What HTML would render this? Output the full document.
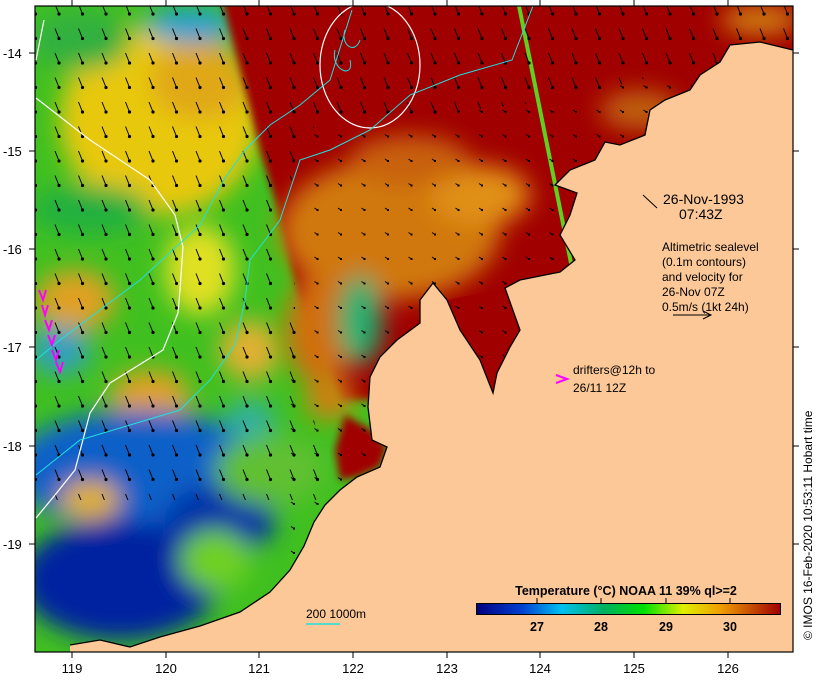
<!DOCTYPE html>
<html><head><meta charset="utf-8"><style>
html,body{margin:0;padding:0;background:#fff;}
svg{display:block;font-family:"Liberation Sans",sans-serif;}
</style></head><body>
<svg width="820" height="680" viewBox="0 0 820 680" xmlns="http://www.w3.org/2000/svg">
<defs>
<linearGradient id="cb" x1="0" x2="1" y1="0" y2="0">
<stop offset="0" stop-color="#000080"/><stop offset="0.15" stop-color="#0040d0"/><stop offset="0.28" stop-color="#00c0f0"/><stop offset="0.42" stop-color="#00b060"/><stop offset="0.55" stop-color="#00e000"/><stop offset="0.68" stop-color="#e0f000"/><stop offset="0.8" stop-color="#f0a000"/><stop offset="1" stop-color="#a00000"/>
</linearGradient>
<filter id="bl" x="-20%" y="-20%" width="140%" height="140%"><feGaussianBlur stdDeviation="12"/></filter>
<filter id="bl2"><feGaussianBlur stdDeviation="4"/></filter>
<pattern id="arr" width="23.5" height="24.5" patternUnits="userSpaceOnUse">
<line x1="8" y1="4" x2="12" y2="14" stroke="#000" stroke-width="1"/><circle cx="12" cy="14" r="1.6" fill="#000"/>
</pattern>
<pattern id="arr2" width="23.5" height="24.5" patternUnits="userSpaceOnUse">
<line x1="9" y1="12" x2="12" y2="14" stroke="#000" stroke-width="1"/><rect x="11" y="13" width="2" height="2" fill="#000"/>
</pattern>
<clipPath id="ocean"><path d="M35,6 H793 V50 L760,42 730,45 720,62 700,75 690,90 665,100 650,110 645,135 620,145 605,142 595,160 570,170 555,185 577,193 570,215 560,235 575,260 560,272 540,276 520,280 505,288 520,330 510,347 497,373 493,393 480,360 460,330 447,300 433,283 420,300 420,323 397,340 380,357 370,377 368,407 372,440 387,447 380,467 357,477 340,490 325,505 314,522 304,546 290,570 270,592 240,612 200,626 160,637 130,647 100,640 70,645 70,652 H35 Z"/></clipPath>
<clipPath id="east"><path d="M300,130 L560,100 L800,40 V700 H280 Z"/></clipPath>
</defs>
<rect x="35" y="6" width="758" height="646" fill="#fcc898"/>
<g clip-path="url(#ocean)">
<rect x="35" y="6" width="758" height="646" fill="#40c020"/>
<g filter="url(#bl)">
<ellipse cx="160" cy="120" rx="100" ry="95" fill="#e8c810"/>
<ellipse cx="200" cy="80" rx="50" ry="40" fill="#e0a818"/>
<ellipse cx="80" cy="40" rx="50" ry="30" fill="#30b040"/>
<ellipse cx="190" cy="25" rx="45" ry="18" fill="#20a0d0"/>
<ellipse cx="90" cy="210" rx="60" ry="25" fill="#20b040"/>
<ellipse cx="200" cy="270" rx="35" ry="45" fill="#e0e020"/>
<ellipse cx="75" cy="300" rx="40" ry="30" fill="#e0a020"/>
<ellipse cx="60" cy="350" rx="30" ry="25" fill="#30a0c0"/>
<ellipse cx="150" cy="395" rx="40" ry="25" fill="#e0a020"/>
<ellipse cx="250" cy="350" rx="30" ry="30" fill="#e0b030"/>
<ellipse cx="140" cy="470" rx="130" ry="60" fill="#1060c8"/>
<ellipse cx="120" cy="580" rx="100" ry="60" fill="#0020a0"/>
<ellipse cx="220" cy="520" rx="55" ry="35" fill="#0030a8"/>
<ellipse cx="215" cy="560" rx="35" ry="30" fill="#70d020"/>
<ellipse cx="270" cy="470" rx="55" ry="35" fill="#60c030"/>
<ellipse cx="90" cy="500" rx="30" ry="20" fill="#e0b020"/>
<ellipse cx="250" cy="420" rx="25" ry="20" fill="#30b0a0"/>
</g>
<path filter="url(#bl2)" d="M222,0 H800 V400 L340,400 300,300 285,240 275,200 260,150 248,100 Z" fill="#a00000"/>
<g filter="url(#bl)">
<ellipse cx="390" cy="230" rx="110" ry="70" fill="#d07810"/>
<ellipse cx="480" cy="195" rx="50" ry="30" fill="#e09018"/>
<ellipse cx="320" cy="330" rx="35" ry="55" fill="#d07010"/>
<ellipse cx="410" cy="160" rx="60" ry="25" fill="#c86008"/>
<ellipse cx="360" cy="320" rx="22" ry="45" fill="#20b070"/>
<ellipse cx="330" cy="400" rx="25" ry="20" fill="#d08010"/>
<ellipse cx="760" cy="20" rx="40" ry="15" fill="#d08010"/>
<ellipse cx="640" cy="110" rx="40" ry="20" fill="#c06008"/>
</g>
<path d="M345,415 L372,430 387,447 380,467 357,477 340,480 335,450 Z" fill="#a00000" filter="url(#bl2)"/>
<path d="M447,300 L520,285 520,330 500,380 490,385 470,340 Z" fill="#a00000"/>
<line x1="519" y1="6" x2="572" y2="268" stroke="#60d020" stroke-width="4"/>
<path d="M35,6 H800 V40 L560,100 300,130 280,250 300,350 330,500 H35 Z" fill="url(#arr)"/>
<g clip-path="url(#east)"><rect x="35" y="6" width="758" height="646" fill="url(#arr2)"/></g>
<path d="M36,98 L90,140 150,180 175,215 183,247 180,290 178,313 163,350 110,383 90,413 75,470 55,495 36,518" stroke="#fff" stroke-width="1.2" fill="none"/>
<path d="M44,20 L36,60" stroke="#fff" stroke-width="1.2" fill="none"/>
<ellipse cx="370" cy="65" rx="50" ry="63" stroke="#fff" stroke-width="1.2" fill="none"/>
<path d="M533,6 L512,60 460,75 410,95 370,130 330,150 300,160 290,190 280,220 250,260 245,300 235,345 210,380 180,410 130,425 80,440 36,475" stroke="#20e0e0" stroke-width="1" fill="none"/>
<path d="M352,10 L330,80 300,105 270,125 245,150 225,178 200,225 140,280 100,310 60,340 36,360" stroke="#20e0e0" stroke-width="1" fill="none"/>
<path d="M345,30 C340,45 355,55 360,40 M335,50 C330,70 355,80 350,60" stroke="#20e0e0" stroke-width="1" fill="none"/>
</g>
<g stroke="#f0f" stroke-width="2" fill="none">
<path d="M39,290 L43,300 46,290"/><path d="M42,305 L45,315 48,305"/><path d="M45,320 L49,330 52,320"/><path d="M48,335 L52,345 55,335"/><path d="M52,350 L56,360 59,350"/><path d="M56,362 L60,372 63,362"/>
</g>
<path d="M70,645 L100,640 130,647 160,637 200,626 240,612 270,592 290,570 304,546 314,522 325,505 340,490 357,477 380,467 387,447 372,440 368,407 370,377 380,357 397,340 420,323 420,300 433,283 447,300 460,330 480,360 493,393 497,373 510,347 520,330 505,288 520,280 540,276 560,272 575,260 560,235 570,215 577,193 555,185 570,170 595,160 605,142 620,145 645,135 650,110 665,100 690,90 700,75 720,62 730,45 760,42 793,50" stroke="#000" stroke-width="1.3" fill="none"/>
<rect x="35" y="6" width="758" height="646" fill="none" stroke="#000" stroke-width="1.2"/>
<g stroke="#000" stroke-width="1">
<line x1="72" y1="652" x2="72" y2="658"/><line x1="166" y1="652" x2="166" y2="658"/><line x1="259" y1="652" x2="259" y2="658"/><line x1="353" y1="652" x2="353" y2="658"/><line x1="447" y1="652" x2="447" y2="658"/><line x1="540" y1="652" x2="540" y2="658"/><line x1="634" y1="652" x2="634" y2="658"/><line x1="728" y1="652" x2="728" y2="658"/>
<line x1="72" y1="0" x2="72" y2="6"/><line x1="166" y1="0" x2="166" y2="6"/><line x1="259" y1="0" x2="259" y2="6"/><line x1="353" y1="0" x2="353" y2="6"/><line x1="447" y1="0" x2="447" y2="6"/><line x1="540" y1="0" x2="540" y2="6"/><line x1="634" y1="0" x2="634" y2="6"/><line x1="728" y1="0" x2="728" y2="6"/>
<line x1="29" y1="53" x2="35" y2="53"/><line x1="29" y1="151" x2="35" y2="151"/><line x1="29" y1="249" x2="35" y2="249"/><line x1="29" y1="347" x2="35" y2="347"/><line x1="29" y1="446" x2="35" y2="446"/><line x1="29" y1="544" x2="35" y2="544"/>
<line x1="793" y1="53" x2="799" y2="53"/><line x1="793" y1="151" x2="799" y2="151"/><line x1="793" y1="249" x2="799" y2="249"/><line x1="793" y1="347" x2="799" y2="347"/><line x1="793" y1="446" x2="799" y2="446"/><line x1="793" y1="544" x2="799" y2="544"/>
</g>
<g font-size="13" fill="#000">
<text x="3" y="58">-14</text><text x="3" y="156">-15</text><text x="3" y="254">-16</text><text x="3" y="352">-17</text><text x="3" y="451">-18</text><text x="3" y="549">-19</text>
<g text-anchor="middle"><text x="72" y="673">119</text><text x="166" y="673">120</text><text x="259" y="673">121</text><text x="353" y="673">122</text><text x="447" y="673">123</text><text x="540" y="673">124</text><text x="634" y="673">125</text><text x="728" y="673">126</text></g>
</g>
<text x="663" y="204" font-size="14">26-Nov-1993</text>
<text x="679" y="219" font-size="14">07:43Z</text>
<line x1="643" y1="195" x2="657" y2="208" stroke="#000"/>
<g font-size="12"><text x="662" y="251">Altimetric sealevel</text><text x="662" y="266">(0.1m contours)</text><text x="662" y="281">and velocity for</text><text x="662" y="296">26-Nov 07Z</text><text x="662" y="311">0.5m/s (1kt 24h)</text>
<text x="573" y="374">drifters@12h to</text><text x="573" y="392">26/11 12Z</text>
<text x="306" y="618">200  1000m</text></g>
<path d="M673,315 H711 M703,311 L711,315 703,319" stroke="#000" fill="none"/>
<path d="M556,375 L567,379 556,383" stroke="#f0f" stroke-width="2" fill="none"/>
<line x1="306" y1="624" x2="340" y2="624" stroke="#20e0e0" stroke-width="1.5"/>
<text x="626" y="595" font-size="12.5" font-weight="bold" text-anchor="middle">Temperature (°C) NOAA 11 39% ql&gt;=2</text>
<rect x="476.5" y="603.5" width="304" height="11" fill="url(#cb)" stroke="#000"/>
<g stroke="#000"><line x1="537" y1="598" x2="537" y2="603"/><line x1="601" y1="598" x2="601" y2="603"/><line x1="666" y1="598" x2="666" y2="603"/><line x1="730" y1="598" x2="730" y2="603"/></g>
<g font-size="12.5" font-weight="bold" text-anchor="middle"><text x="537" y="631">27</text><text x="601" y="631">28</text><text x="666" y="631">29</text><text x="730" y="631">30</text></g>
<text transform="translate(812,640) rotate(-90)" font-size="12">© IMOS 16-Feb-2020 10:53:11 Hobart time</text>
</svg>
</body></html>
